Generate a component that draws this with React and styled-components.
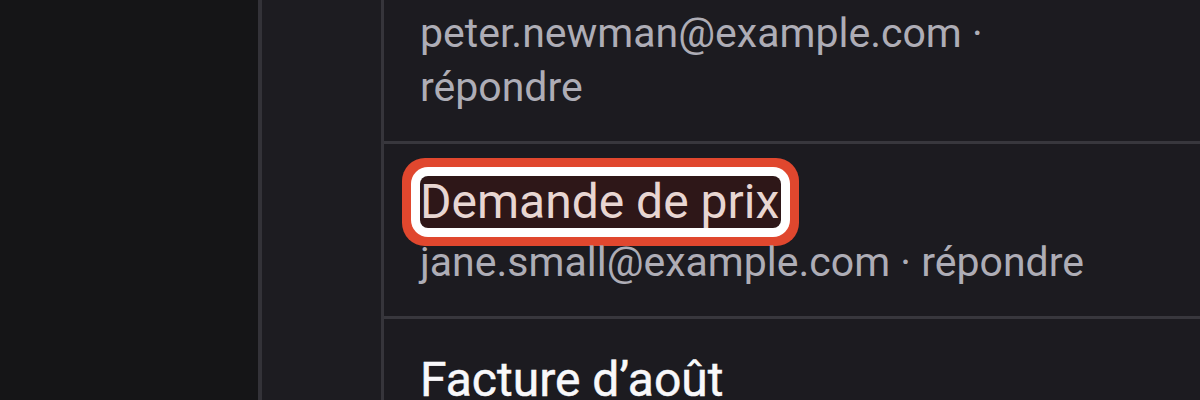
import React from "react";
import styled, { createGlobalStyle } from "styled-components";

const Global = createGlobalStyle`
  html, body { margin: 0; padding: 0; background: #151517; }
  body { font-family: Roboto, "Liberation Sans", Arial, sans-serif; }
  * { box-sizing: border-box; }
`;

const Shell = styled.div`
  display: flex;
  width: 1200px;
  height: 400px;
  overflow: hidden;
  background: #151517;
`;

const Sidebar = styled.aside`
  flex: 0 0 262px;
  background: #151517;
  border-right: 4px solid #333238;
`;

const Rail = styled.nav`
  flex: 0 0 122px;
  background: #1d1c21;
  border-right: 3px solid #36353b;
`;

const ListPane = styled.section`
  flex: 1 1 auto;
  min-width: 0;
  background: #1c1b20;
  overflow: hidden;
`;

const Scroller = styled.ul`
  list-style: none;
  margin: -85px 0 0 0;
  padding: 0;
`;

const Row = styled.li`
  padding: 31px 100px 27px 36px;
  border-bottom: 3px solid #38373d;
`;

const Title = styled.div`
  font-size: 48px;
  line-height: 60px;
  color: ${(p) => (p.$unread ? "#f8f8fa" : "#e2e1e6")};
  font-weight: 400;
  white-space: nowrap;
  -webkit-text-stroke: ${(p) => (p.$unread ? "0.5px #f8f8fa" : "0")};
`;

const Highlight = styled.span`
  display: inline-block;
  height: 52px;
  line-height: 52px;
  padding: 0 2px 0 0;
  vertical-align: top;
  margin-top: 1px;
  background: #2e1718;
  color: #e8d6d2;
  border-radius: 8px;
  box-shadow: 0 0 0 9px #ffffff, 0 0 0 18px #e0472e;
`;

const Meta = styled.div`
  font-size: 41px;
  line-height: 54px;
  color: #aeadb6;
`;

const messages = [
  { id: 1, title: "Rendez-vous de suivi", from: "peter.newman@example.com" },
  { id: 2, title: "Demande de prix", from: "jane.small@example.com", marked: true },
  { id: 3, title: "Facture d’août", from: "olivia.green@example.com", unread: true },
];

export default function App() {
  return (
    <>
      <Global />
      <Shell>
        <Sidebar />
        <Rail />
        <ListPane>
          <Scroller>
            {messages.map((m) => (
              <Row key={m.id}>
                <Title $unread={m.unread}>
                  {m.marked ? <Highlight>{m.title}</Highlight> : m.title}
                </Title>
                <Meta>{m.from} · répondre</Meta>
              </Row>
            ))}
          </Scroller>
        </ListPane>
      </Shell>
    </>
  );
}
